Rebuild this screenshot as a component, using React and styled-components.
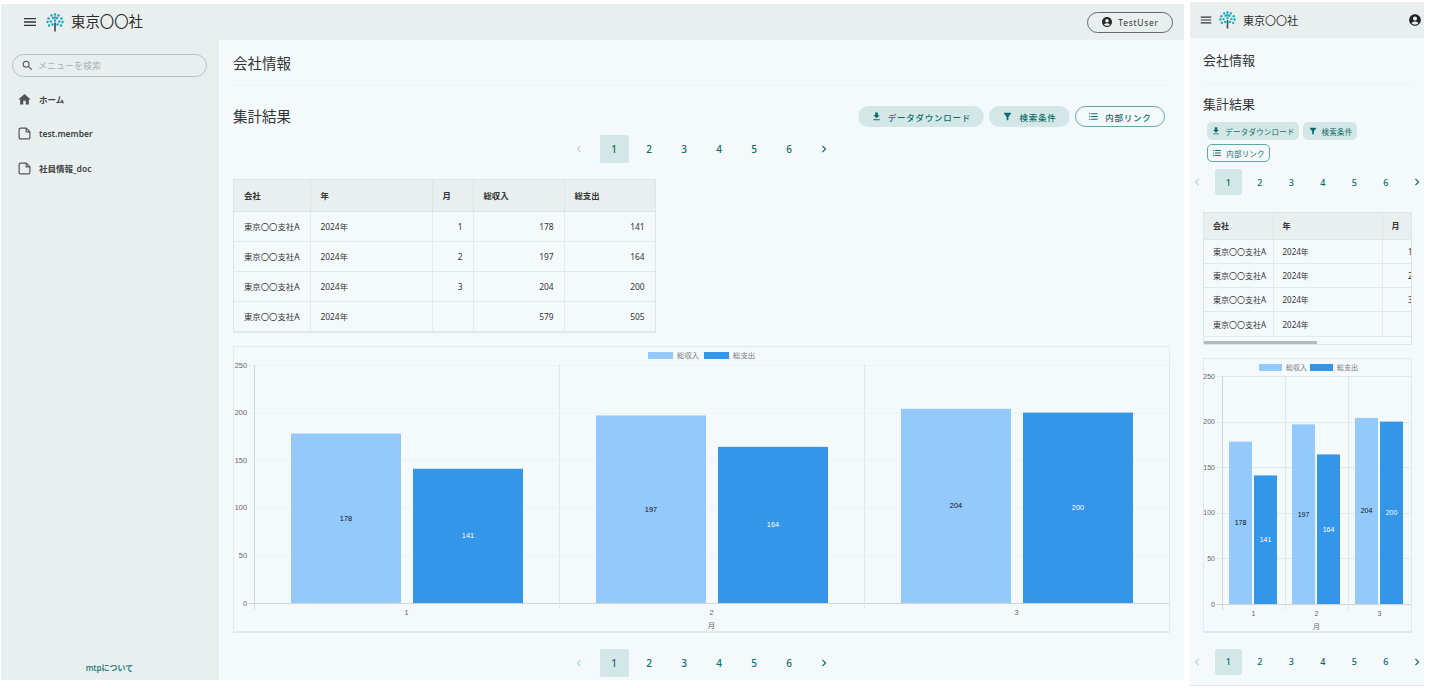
import React from 'react';
import styled, { createGlobalStyle } from 'styled-components';
import {
  MdMenu,
  MdHome,
  MdSearch,
  MdFileDownload,
  MdFilterAlt,
  MdFormatListBulleted,
  MdAccountCircle,
  MdChevronLeft,
  MdChevronRight,
} from 'react-icons/md';

const FONT = '"Noto Sans", "Noto Sans CJK JP", sans-serif';
const TEAL = '#0d6b6b';

const GlobalStyle = createGlobalStyle`
  html, body {
    margin: 0;
    background: #fff;
    overflow: hidden;
  }
  body {
    font-family: ${FONT};
    color: #333;
  }
  * {
    box-sizing: border-box;
  }
`;

const Page = styled.div`
  display: flex;
  align-items: flex-start;
  gap: 6px;
  padding-left: 1px;
  width: 1429px;
  height: 688px;
`;

const Screen = styled.div`
  display: flex;
  flex-direction: column;
  flex: none;
  width: ${(p) => (p.$compact ? 234 : 1183)}px;
  height: ${(p) => (p.$compact ? 684 : 676)}px;
  margin-top: ${(p) => (p.$compact ? 2 : 4)}px;
  background: #f4f9fc;
  overflow: hidden;
  ${(p) => p.$compact && 'border-bottom: 1px solid #e3e8ea;'}
`;

const Header = styled.header`
  display: flex;
  align-items: center;
  flex: none;
  height: 36px;
  padding: ${(p) => (p.$compact ? '0 2px 0 9px' : '0 11px 0 21px')};
  background: #e9efef;
`;

const MenuButton = styled(MdMenu)`
  flex: none;
  font-size: ${(p) => (p.$compact ? 14 : 16)}px;
  color: #333;
`;

const LogoMark = styled.svg`
  flex: none;
  width: ${(p) => (p.$compact ? 17 : 18)}px;
  height: ${(p) => (p.$compact ? 18 : 19)}px;
  margin: ${(p) => (p.$compact ? '0 7px 0 6px' : '0 7px 0 8px')};
`;

const Brand = styled.div`
  font-size: ${(p) => (p.$compact ? 11 : 14.4)}px;
  line-height: 1;
  color: #2b2b2b;
  white-space: nowrap;
`;

const UserButton = styled.button`
  display: flex;
  align-items: center;
  justify-content: center;
  gap: 5px;
  width: 86px;
  height: 21px;
  margin-left: auto;
  padding: 0;
  border: 1px solid #666;
  border-radius: 11px;
  background: transparent;
  font-family: ${FONT};
  font-size: 8.5px;
  letter-spacing: 0.7px;
  color: #333;

  svg {
    font-size: 12px;
    color: #2a2a2a;
  }
`;

const UserIcon = styled(MdAccountCircle)`
  margin-left: auto;
  font-size: 14px;
  color: #222;
`;

const Body = styled.div`
  display: flex;
  flex: 1;
  min-height: 0;
`;

const Sidebar = styled.aside`
  display: flex;
  flex-direction: column;
  flex: none;
  width: 218px;
  padding: 14px 12px 7px 11px;
  background: #e9efef;
`;

const SearchBox = styled.div`
  display: flex;
  align-items: center;
  gap: 4px;
  height: 23px;
  padding: 0 8px;
  border: 1px solid #b9c3c3;
  border-radius: 12px;
  font-size: 9px;
  color: #a9b2b2;

  svg {
    font-size: 13px;
    color: #555;
  }
`;

const NavList = styled.nav`
  display: flex;
  flex-direction: column;
  gap: 14.5px;
  margin-top: 12px;
`;

const NavItem = styled.a`
  display: flex;
  align-items: center;
  gap: 7px;
  height: 20px;
  padding-left: 6px;
  font-size: 8.5px;
  font-weight: 600;
  color: #3d4444;

  svg {
    flex: none;
    width: 15px;
    height: 15px;
    color: #555;
    margin-left: -1px;
  }
`;

const SidebarFooter = styled.div`
  margin-top: auto;
  text-align: center;
  font-size: 8px;
  font-weight: 600;
  color: #2a7f80;
`;

const Main = styled.main`
  flex: 1;
  min-width: 0;
  padding: ${(p) => (p.$compact ? '0 12px 0 13px' : '0 14px')};
`;

const PageTitle = styled.h1`
  height: 46px;
  margin: 0;
  padding-top: ${(p) => (p.$compact ? 12 : 13)}px;
  border-bottom: 1px solid #edf2f4;
  font-size: ${(p) => (p.$compact ? 13 : 14.5)}px;
  font-weight: 400;
  line-height: 20px;
  color: #333;
`;

const SectionRow = styled.div`
  display: flex;
  align-items: flex-start;
  justify-content: space-between;
  margin-top: 20px;
  padding-right: 5px;
`;

const SectionTitle = styled.h2`
  margin: ${(p) => (p.$compact ? '10px 0 0' : '0')};
  font-size: ${(p) => (p.$compact ? 13 : 14.5)}px;
  font-weight: 400;
  line-height: 20px;
  color: #333;
`;

const ButtonGroup = styled.div`
  display: flex;
  flex-wrap: wrap;
  gap: ${(p) => (p.$compact ? 4 : 5)}px;
  ${(p) => p.$compact && 'margin: 8px 0 0 4px;'}
`;

const ActionButton = styled.button`
  display: flex;
  align-items: center;
  justify-content: center;
  gap: ${(p) => (p.$compact ? 4 : 6)}px;
  width: ${(p) => p.$w}px;
  height: ${(p) => (p.$compact ? 18 : 21)}px;
  padding: 0;
  border: 1px solid ${(p) => (p.$outlined ? '#5fa6a6' : 'transparent')};
  border-radius: ${(p) => (p.$compact ? 5 : 11)}px;
  background: ${(p) => (p.$outlined ? 'transparent' : '#d3e8e6')};
  font-family: ${FONT};
  font-size: ${(p) => (p.$compact ? 7.5 : 8.5)}px;
  font-weight: ${(p) => (p.$compact ? 400 : 500)};
  letter-spacing: ${(p) => (p.$compact ? 0.2 : 0.75)}px;
  color: ${TEAL};
  white-space: nowrap;

  svg {
    flex: none;
    font-size: ${(p) => (p.$compact ? 10 : 11)}px;
  }
`;

const Pager = styled.div`
  display: flex;
  justify-content: center;
  gap: ${(p) => (p.$compact ? 4.5 : 6)}px;
  margin-top: ${(p) => p.$top}px;
  ${(p) => p.$compact && 'margin-left: -13px; width: 234px;'}
`;

const PagerItem = styled.div`
  display: flex;
  flex: none;
  align-items: center;
  justify-content: center;
  width: ${(p) => (p.$compact ? 27 : 29)}px;
  height: ${(p) => (p.$compact ? 26 : 28)}px;
  border-radius: 2px;
  background: ${(p) => (p.$active ? '#d3e8e6' : 'transparent')};
  font-size: ${(p) => (p.$compact ? 9 : 10)}px;
  font-weight: 500;
  color: ${(p) => (p.$disabled ? '#b8d6d6' : TEAL)};

  svg {
    font-size: 14px;
  }
`;

const TableFrame = styled.div`
  width: ${(p) => (p.$compact ? 209 : 423)}px;
  margin-top: ${(p) => (p.$compact ? 17 : 16)}px;
  border: 1px solid #dfe5e7;
  overflow: hidden;
`;

const DataTable = styled.table`
  table-layout: fixed;
  width: ${(p) => (p.$compact ? 401 : 421)}px;
  border-collapse: collapse;
  font-size: ${(p) => (p.$compact ? 8 : 8.4)}px;
  color: #333;
`;

const HeadCell = styled.th`
  height: ${(p) => (p.$compact ? 26 : 31)}px;
  padding: 0 ${(p) => (p.$compact ? 9 : 10)}px;
  border-right: 1px solid #dfe5e7;
  border-bottom: 1px solid #dfe5e7;
  background: #e9efef;
  font-weight: 600;
  text-align: left;
`;

const Cell = styled.td`
  height: ${(p) => (p.$compact ? 24.3 : 30)}px;
  padding: 0 ${(p) => (p.$compact ? 9 : 10)}px;
  border-right: 1px solid #e4e9eb;
  border-bottom: 1px solid #e4e9eb;
  text-align: ${(p) => (p.$right ? 'right' : 'left')};
  white-space: nowrap;
`;

const ScrollTrack = styled.div`
  height: 7px;
  padding-top: 4px;
`;

const ScrollThumb = styled.div`
  width: 113px;
  height: 3px;
  background: #b4b9ba;
`;

const ChartFrame = styled.div`
  width: ${(p) => (p.$compact ? 209 : 937)}px;
  height: ${(p) => (p.$compact ? 275 : 287)}px;
  margin-top: 13px;
  border: 1px solid #e3e9ec;
  border-bottom-width: 2px;
`;

const ChartSvg = styled.svg`
  display: block;
  overflow: visible;
  font-family: 'Liberation Sans', 'Noto Sans CJK JP', sans-serif;
`;

const columns = [
  { label: '会社', key: 'company', full: 76, small: 69 },
  { label: '年', key: 'year', full: 122, small: 109 },
  { label: '月', key: 'month', full: 41, small: 40, right: true },
  { label: '総収入', key: 'income', full: 91, small: 91, right: true },
  { label: '総支出', key: 'expense', full: 91, small: 92, right: true },
];

const rows = [
  { company: '東京〇〇支社A', year: '2024年', month: '1', income: 178, expense: 141 },
  { company: '東京〇〇支社A', year: '2024年', month: '2', income: 197, expense: 164 },
  { company: '東京〇〇支社A', year: '2024年', month: '3', income: 204, expense: 200 },
  { company: '東京〇〇支社A', year: '2024年', month: '', income: 579, expense: 505 },
];

const LIGHT_BAR = '#93c9fb';
const DARK_BAR = '#3496e9';

const chartSizes = {
  full: {
    w: 935, h: 284, left: 20, right: 935, top: 18, bottom: 256, catW: 305, barA: 37, barB: 159, barW: 110,
    grid: '#eef3f5', fontSize: 7.4,
    legend: [414, 470], swatch: 25,
  },
  small: {
    w: 207, h: 272, left: 18, right: 207, top: 17, bottom: 245, catW: 63, barA: 7, barB: 32, barW: 23,
    grid: '#e3e8ea', fontSize: 7,
    legend: [55, 106], swatch: 23,
  },
};

const BarChart = ({ size }) => {
  const c = chartSizes[size];
  const y = (v) => c.bottom - ((c.bottom - c.top) * v) / 250;
  const data = rows.slice(0, 3);

  return (
    <ChartSvg width={c.w} height={c.h} viewBox={`0 0 ${c.w} ${c.h}`}>
      {[250, 200, 150, 100, 50, 0].map((v) => (
        <g key={v}>
          <line
            x1={c.left - 5}
            x2={c.right}
            y1={Math.round(y(v)) + 0.5}
            y2={Math.round(y(v)) + 0.5}
            stroke={v === 0 ? '#cfd6d9' : c.grid}
          />
          <text x={c.left - 7} y={y(v) + 2.5} textAnchor="end" fontSize={c.fontSize} fill="#666">
            {v}
          </text>
        </g>
      ))}
      {[0, 1, 2, 3].map((i) => (
        <line
          key={i}
          x1={c.left + c.catW * i + 0.5}
          x2={c.left + c.catW * i + 0.5}
          y1={c.top}
          y2={c.bottom + 6}
          stroke={i === 0 ? '#cfd6d9' : '#e1e6e8'}
        />
      ))}
      {data.map((d, i) => {
        const x = c.left + c.catW * i;
        return (
          <g key={d.month}>
            <rect x={x + c.barA} y={y(d.income)} width={c.barW} height={c.bottom - y(d.income)} fill={LIGHT_BAR} />
            <rect x={x + c.barB} y={y(d.expense)} width={c.barW} height={c.bottom - y(d.expense)} fill={DARK_BAR} />
            <text
              x={x + c.barA + c.barW / 2}
              y={(y(d.income) + c.bottom) / 2 + 2.5}
              textAnchor="middle"
              fontSize={c.fontSize}
              fill="#111"
            >
              {d.income}
            </text>
            <text
              x={x + c.barB + c.barW / 2}
              y={(y(d.expense) + c.bottom) / 2 + 2.5}
              textAnchor="middle"
              fontSize={c.fontSize}
              fill="#fff"
            >
              {d.expense}
            </text>
            <text x={x + c.catW / 2} y={c.bottom + 11.5} textAnchor="middle" fontSize={c.fontSize} fill="#666">
              {d.month}
            </text>
          </g>
        );
      })}
      <text x={(c.left + c.right) / 2} y={c.bottom + 24.5} textAnchor="middle" fontSize={c.fontSize} fill="#666">
        月
      </text>
      {['総収入', '総支出'].map((label, i) => (
        <g key={label}>
          <rect x={c.legend[i]} y={5} width={c.swatch} height={7} fill={i === 0 ? LIGHT_BAR : DARK_BAR} />
          <text x={c.legend[i] + c.swatch + 4} y={11} fontSize={c.fontSize} fill="#777">
            {label}
          </text>
        </g>
      ))}
    </ChartSvg>
  );
};

const Logo = ({ $compact }) => {
  const dots = [
    [9, 1.5], [5.5, 2.5], [12.5, 2.5], [2.5, 5.5], [15.5, 5.5], [7, 5], [11, 5],
    [1.5, 9], [16.5, 9], [4.8, 8.5], [13.2, 8.5], [9, 4.5],
    [3, 12.5], [15, 12.5], [6.5, 11.5], [11.5, 11.5], [9, 7.5],
  ];
  return (
    <LogoMark $compact={$compact} viewBox="0 0 18 19">
      {dots.map(([cx, cy]) => (
        <circle key={`${cx}-${cy}`} cx={cx} cy={cy} r="1.25" fill="#19a9bd" />
      ))}
      <path d="M9 9.5 V18.5" stroke="#4a4f50" strokeWidth="1.7" />
    </LogoMark>
  );
};

const DocIcon = () => (
  <svg viewBox="0 0 15 15" fill="none" stroke="currentColor" strokeWidth="1.2">
    <path d="M3.6 2.1 H9.2 L12.9 5.8 V11.4 a1.5 1.5 0 0 1 -1.5 1.5 H3.6 a1.5 1.5 0 0 1 -1.5 -1.5 V3.6 a1.5 1.5 0 0 1 1.5 -1.5 Z" />
    <path d="M9.2 2.1 V5.8 H12.9" />
  </svg>
);

const Pagination = ({ compact, top }) => (
  <Pager $compact={compact} $top={top}>
    <PagerItem $compact={compact} $disabled>
      <MdChevronLeft />
    </PagerItem>
    {[1, 2, 3, 4, 5, 6].map((n) => (
      <PagerItem key={n} $compact={compact} $active={n === 1}>
        {n}
      </PagerItem>
    ))}
    <PagerItem $compact={compact}>
      <MdChevronRight />
    </PagerItem>
  </Pager>
);

const Actions = ({ compact }) => (
  <ButtonGroup $compact={compact}>
    <ActionButton $compact={compact} $w={compact ? 92 : 126}>
      <MdFileDownload />
      データダウンロード
    </ActionButton>
    <ActionButton $compact={compact} $w={compact ? 54 : 81}>
      <MdFilterAlt />
      検索条件
    </ActionButton>
    <ActionButton $compact={compact} $outlined $w={compact ? 63 : 90}>
      <MdFormatListBulleted />
      内部リンク
    </ActionButton>
  </ButtonGroup>
);

const ResultTable = ({ compact }) => {
  const sizeKey = compact ? 'small' : 'full';
  return (
    <TableFrame $compact={compact}>
      <DataTable $compact={compact}>
        <colgroup>
          {columns.map((col) => (
            <col key={col.key} width={col[sizeKey]} />
          ))}
        </colgroup>
        <thead>
          <tr>
            {columns.map((col) => (
              <HeadCell key={col.key} $compact={compact}>
                {col.label}
              </HeadCell>
            ))}
          </tr>
        </thead>
        <tbody>
          {rows.map((row, i) => (
            <tr key={i}>
              {columns.map((col) => (
                <Cell key={col.key} $compact={compact} $right={col.right}>
                  {row[col.key]}
                </Cell>
              ))}
            </tr>
          ))}
        </tbody>
      </DataTable>
      {compact && (
        <ScrollTrack>
          <ScrollThumb />
        </ScrollTrack>
      )}
    </TableFrame>
  );
};

const App = () => (
  <Page>
    <GlobalStyle />

    <Screen>
      <Header>
        <MenuButton />
        <Logo />
        <Brand>東京〇〇社</Brand>
        <UserButton>
          <MdAccountCircle />
          TestUser
        </UserButton>
      </Header>
      <Body>
        <Sidebar>
          <SearchBox>
            <MdSearch />
            メニューを検索
          </SearchBox>
          <NavList>
            <NavItem>
              <MdHome />
              ホーム
            </NavItem>
            <NavItem>
              <DocIcon />
              test.member
            </NavItem>
            <NavItem>
              <DocIcon />
              社員情報_doc
            </NavItem>
          </NavList>
          <SidebarFooter>mtpについて</SidebarFooter>
        </Sidebar>
        <Main>
          <PageTitle>会社情報</PageTitle>
          <SectionRow>
            <SectionTitle>集計結果</SectionTitle>
            <Actions />
          </SectionRow>
          <Pagination top={8} />
          <ResultTable />
          <ChartFrame>
            <BarChart size="full" />
          </ChartFrame>
          <Pagination top={16} />
        </Main>
      </Body>
    </Screen>

    <Screen $compact>
      <Header $compact>
        <MenuButton $compact />
        <Logo $compact />
        <Brand $compact>東京〇〇社</Brand>
        <UserIcon />
      </Header>
      <Main $compact>
        <PageTitle $compact>会社情報</PageTitle>
        <SectionTitle $compact>集計結果</SectionTitle>
        <Actions compact />
        <Pagination compact top={7} />
        <ResultTable compact />
        <ChartFrame $compact>
          <BarChart size="small" />
        </ChartFrame>
        <Pagination compact top={16} />
      </Main>
    </Screen>
  </Page>
);

export default App;
